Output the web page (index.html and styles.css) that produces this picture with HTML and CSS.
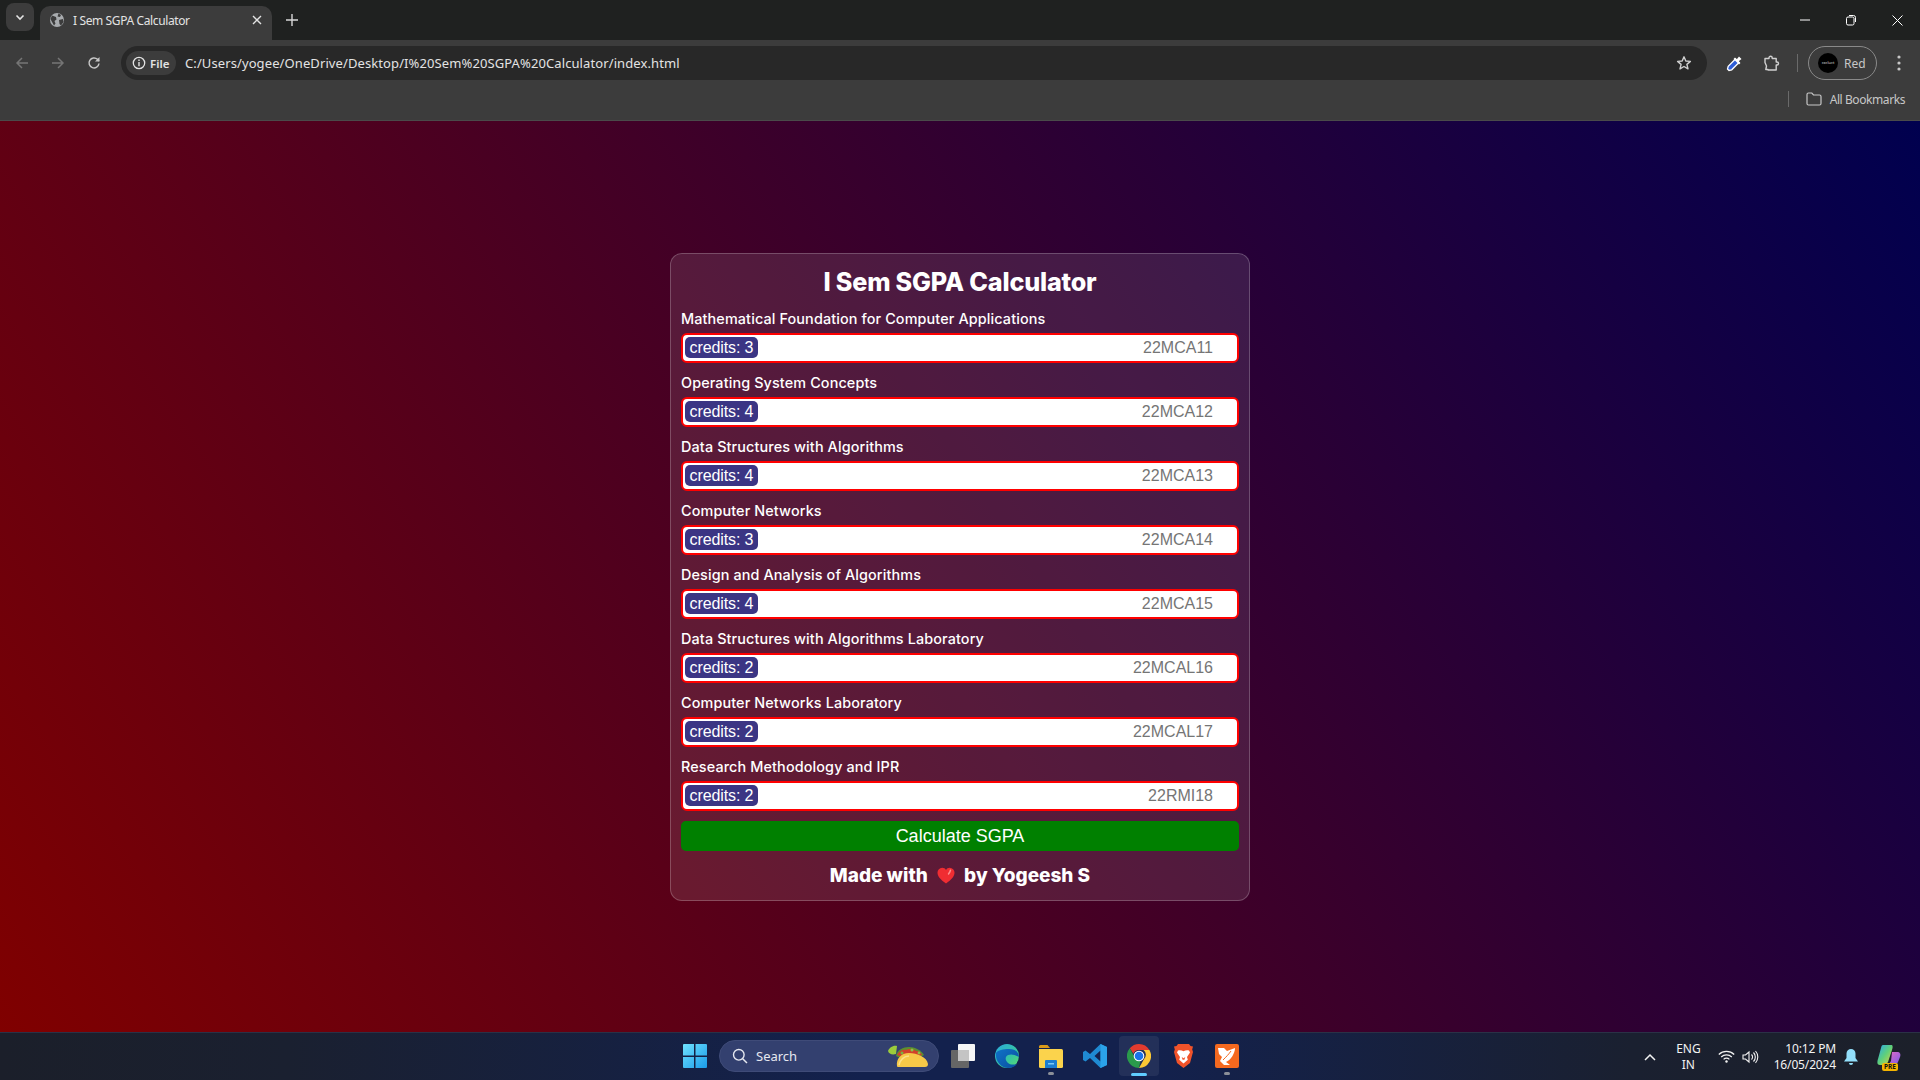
FILE: index.html
```html
<!DOCTYPE html>
<html lang="en">
<head>
<meta charset="utf-8">
<title>I Sem SGPA Calculator</title>
<link rel="stylesheet" href="styles.css">
</head>
<body>
<header class="chrome">
  <div class="tabstrip">
    <div class="tabsearch"><svg width="12" height="12" viewBox="0 0 12 12"><path d="M2.500 4.500 6 8l3.500-3.500" fill="none" stroke="#e3e3e3" stroke-width="1.600"/></svg></div>
    <div class="tab">
      <svg class="favicon" width="16" height="16" viewBox="0 0 16 16"><circle cx="8" cy="8" r="7" fill="#a8abae"/><path d="M3 3.500 7 5l.5 2.500L5.500 9l1 2.500-1.500 2L2.500 9 1.500 7zM9.500 1.500 12 3l-1 2-2.500-.5zM10 8l4-1 .5 3-2.500 3.500L10.500 12z" fill="#3c3c3c"/></svg>
      <span class="tabtitle">I Sem SGPA Calculator</span>
      <svg class="tabclose" width="10" height="10" viewBox="0 0 10 10"><path d="M1 1l8 8M9 1 1 9" stroke="#e3e3e3" stroke-width="1.400"/></svg>
    </div>
    <svg class="newtab" width="12" height="12" viewBox="0 0 12 12"><path d="M6 0v12M0 6h12" stroke="#d8d8d8" stroke-width="1.400"/></svg>
    <div class="winctl">
      <svg width="10" height="10" viewBox="0 0 10 10"><path d="M0 5h10" stroke="#fff"/></svg>
      <svg width="10" height="11" viewBox="0 0 10 11"><rect x=".5" y="2" width="7.500" height="8" rx="1.500" fill="none" stroke="#fff"/><path d="M3 .5h4.500a2 2 0 0 1 2 2V7" fill="none" stroke="#fff"/></svg>
      <svg width="11" height="11" viewBox="0 0 11 11"><path d="M.5.5l10 10M10.500.5l-10 10" stroke="#fff"/></svg>
    </div>
  </div>
  <div class="toolbar">
    <svg class="navicon" width="14" height="14" viewBox="0 0 14 14"><path d="M13 7H2M7 2 2 7l5 5" fill="none" stroke="#757575" stroke-width="1.500"/></svg>
    <svg class="navicon" width="14" height="14" viewBox="0 0 14 14"><path d="M1 7h11M7 2l5 5-5 5" fill="none" stroke="#757575" stroke-width="1.500"/></svg>
    <svg class="navicon" width="14" height="14" viewBox="0 0 14 14"><path d="M12 7.500A5 5 0 1 1 10.500 3.300L12 5" fill="none" stroke="#c7c7c7" stroke-width="1.500"/><path d="M12.500 1v4.500H8z" fill="#c7c7c7"/></svg>
    <div class="omnibox">
      <div class="chip">
        <svg width="14" height="14" viewBox="0 0 14 14"><circle cx="7" cy="7" r="5.700" fill="none" stroke="#e3e3e3" stroke-width="1.300"/><path d="M7 6v4.200M7 3.600v1.300" stroke="#e3e3e3" stroke-width="1.400"/></svg>
        <span>File</span>
      </div>
      <span class="url">C:/Users/yogee/OneDrive/Desktop/I%20Sem%20SGPA%20Calculator/index.html</span>
      <svg class="star" width="16" height="16" viewBox="0 0 16 16"><path d="M8 1.800 9.800 6l4.600.4-3.500 3 1.100 4.500L8 11.500l-4 2.400 1.100-4.500-3.500-3L6.200 6z" fill="none" stroke="#d0d0d0" stroke-width="1.400" stroke-linejoin="round"/></svg>
    </div>
    <svg class="tool dropper" width="18" height="18" viewBox="0 0 18 18"><path d="M3 16.500 1.500 15l.7-2.700L9.500 5l3.500 3.500-7.300 7.300z" fill="#2f5fd8" stroke="#fff" stroke-width="1.300"/><path d="M9 3.500 10.800 5.300 13 2.500 15.500 5 12.700 7.200 14.500 9 13 10.500 7.500 5z" fill="#fff"/></svg>
    <svg class="tool puzzle" width="17" height="17" viewBox="0 0 17 17"><path d="M2 3.500h4V2.800a1.600 1.600 0 0 1 3.200 0v.7h4V7h.8a1.500 1.500 0 0 1 0 3h-.8v5H5v-.5H2.800l.7-3.500L2 7.500z" fill="none" stroke="#d0d0d0" stroke-width="1.400" stroke-linejoin="round"/></svg>
    <div class="tooldiv"></div>
    <div class="profile">
      <div class="avatar"><span>cxcluct</span></div>
      <span>Red</span>
    </div>
    <svg class="kebab" width="4" height="16" viewBox="0 0 4 16"><circle cx="2" cy="2" r="1.600" fill="#c7c7c7"/><circle cx="2" cy="8" r="1.600" fill="#c7c7c7"/><circle cx="2" cy="14" r="1.600" fill="#c7c7c7"/></svg>
  </div>
  <div class="bookmarks">
    <div class="bmdiv"></div>
    <svg width="16" height="14" viewBox="0 0 16 14"><path d="M1 2.500A1.500 1.500 0 0 1 2.500 1h3.300l1.700 2h6A1.500 1.500 0 0 1 15 4.500v7a1.500 1.500 0 0 1-1.500 1.500h-11A1.500 1.500 0 0 1 1 11.500z" fill="none" stroke="#c7c7c7" stroke-width="1.200"/></svg>
    <span>All Bookmarks</span>
  </div>
</header>

<main class="page">
  <section class="card">
    <h1 class="title">I Sem SGPA Calculator</h1>
    <div class="subject"><label class="label">Mathematical Foundation for Computer Applications</label><div class="field"><span class="credits">credits: 3</span><span class="code">22MCA11</span></div></div>
    <div class="subject"><label class="label">Operating System Concepts</label><div class="field"><span class="credits">credits: 4</span><span class="code">22MCA12</span></div></div>
    <div class="subject"><label class="label">Data Structures with Algorithms</label><div class="field"><span class="credits">credits: 4</span><span class="code">22MCA13</span></div></div>
    <div class="subject"><label class="label">Computer Networks</label><div class="field"><span class="credits">credits: 3</span><span class="code">22MCA14</span></div></div>
    <div class="subject"><label class="label">Design and Analysis of Algorithms</label><div class="field"><span class="credits">credits: 4</span><span class="code">22MCA15</span></div></div>
    <div class="subject"><label class="label">Data Structures with Algorithms Laboratory</label><div class="field"><span class="credits">credits: 2</span><span class="code">22MCAL16</span></div></div>
    <div class="subject"><label class="label">Computer Networks Laboratory</label><div class="field"><span class="credits">credits: 2</span><span class="code">22MCAL17</span></div></div>
    <div class="subject"><label class="label">Research Methodology and IPR</label><div class="field"><span class="credits">credits: 2</span><span class="code">22RMI18</span></div></div>
    <button class="calc">Calculate SGPA</button>
    <p class="made">Made with <svg class="heart" width="18" height="17" viewBox="0 0 18 17"><path d="M9 16.500C3.500 12.500.5 9.500.5 5.500A4.800 4.800 0 0 1 5.200.7C6.900.7 8.300 1.600 9 3c.7-1.400 2.100-2.300 3.800-2.300a4.800 4.800 0 0 1 4.700 4.800c0 4-3 7-8.500 11z" fill="#f02d32"/><path d="M11.500 7c.8-1 1.800-2.600 2-3.800" stroke="#ff8f8f" stroke-width="1.500" stroke-linecap="round"/></svg> by Yogeesh S</p>
  </section>
</main>

<footer class="taskbar">
  <div class="taskcenter">
    <svg class="ticon" width="24" height="24" viewBox="0 0 24 24"><defs><linearGradient id="w" x1="0" y1="0" x2="1" y2="1"><stop offset="0" stop-color="#6fe2ff"/><stop offset="1" stop-color="#1a9be8"/></linearGradient></defs><path d="M0 1a1 1 0 0 1 1-1h10v11.500H0zM12.500 0H23a1 1 0 0 1 1 1v10.500H12.500zM0 13h11v11H1a1 1 0 0 1-1-1zM12.500 13H24v10a1 1 0 0 1-1 1H12.500z" fill="url(#w)"/></svg>
    <div class="search">
      <svg width="16" height="16" viewBox="0 0 16 16"><circle cx="6.800" cy="6.800" r="5.300" fill="none" stroke="#e6e8f0" stroke-width="1.400"/><path d="M10.700 10.700 15 15" stroke="#e6e8f0" stroke-width="1.500"/></svg>
      <span>Search</span>
      <svg class="taco" width="40" height="22" viewBox="0 0 40 22"><path d="M0 6c1-3 5-6 9-5l-1 8C4 10 1 9 0 6z" fill="#9ccc3c"/><path d="M8 11C9 5 15 2 21 2c6 0 12 3 15 8l-14 8z" fill="#5d8f2e"/><path d="M9 10c2-4 6-6 9-5 3-2 8-1 10 1 3 0 5 2 6 4L20 14z" fill="#d2402a"/><circle cx="14" cy="8" r="1.500" fill="#7cb342"/><circle cx="24" cy="5" r="1.500" fill="#8bc34a"/><circle cx="31" cy="8" r="1.400" fill="#8bc34a"/><path d="M9 21C8 14 13 8 21 8c8 0 18 4 19 11 0 2-1 3-3 3H11c-1 0-2 0-2-1z" fill="#f7c948"/><path d="M11 20c1-5 5-9 10-9" fill="none" stroke="#fde18a" stroke-width="1.500"/></svg>
    </div>
    <svg class="ticon taskview" width="24" height="24" viewBox="0 0 24 24"><rect x="0" y="6" width="18" height="18" rx="1" fill="#666"/><rect x="7" y="0" width="17" height="17" rx="1" fill="#f6f6f6"/><rect x="7" y="6" width="11" height="11" fill="#c4c4c4"/></svg>
    <svg class="ticon" width="24" height="24" viewBox="0 0 24 24"><defs><linearGradient id="e1" x1="0" y1="0" x2="1" y2="1"><stop offset="0" stop-color="#2aa9e0"/><stop offset=".6" stop-color="#36c6a0"/><stop offset="1" stop-color="#5ddc6a"/></linearGradient><linearGradient id="e2" x1="0" y1="0" x2="1" y2="1"><stop offset="0" stop-color="#0f72c8"/><stop offset="1" stop-color="#0b4f9e"/></linearGradient></defs><circle cx="12" cy="12" r="12" fill="url(#e1)"/><path d="M1 9C0 17 6 24 13 24c4 0 7-1.500 9-4-3 1-7 1-9.500-1.500C10 16 10 12.500 13 11c3-1.300 7-.5 11 2 0-5-4-8-10-8C8 5 3 6 1 9z" fill="url(#e2)"/></svg>
    <div class="tapp">
      <svg width="24" height="24" viewBox="0 0 24 24"><path d="M0 2.500A1.500 1.500 0 0 1 1.500 1h7l2.500 3H0z" fill="#d99a1a"/><path d="M0 5h22.500A1.500 1.500 0 0 1 24 6.500v16a1.500 1.500 0 0 1-1.500 1.500h-21A1.500 1.500 0 0 1 0 22.500z" fill="#fbd34c"/><path d="M7 16h10a1 1 0 0 1 1 1v7H6v-7a1 1 0 0 1 1-1z" fill="#1c7dd0"/><rect x="9" y="19" width="6" height="1.500" fill="#7ccaf5"/></svg>
      <span class="dot"></span>
    </div>
    <svg class="ticon" width="24" height="24" viewBox="0 0 24 24"><path d="M17.500 0 24 3v18l-6.500 3L7 14l-4.500 3.500L0 16V8l2.500-1.500L7 10zM17.500 6.500 11.500 12l6 5.500z" fill="#1f8ad2"/><path d="M17.500 0 24 3v18l-6.500 3z" fill="#2ba3ea"/></svg>
    <div class="active">
      <svg width="24" height="24" viewBox="0 0 24 24"><path d="M12 0a12 12 0 0 1 10.400 6H12a6 6 0 0 0-5.600 3.700L2.800 4.300A12 12 0 0 1 12 0z" fill="#e33b2e"/><path d="M22.400 6A12 12 0 0 1 12 24l5.100-9a6 6 0 0 0-.6-9z" fill="#fcc934"/><path d="M2.800 4.300 7.500 13a6 6 0 0 0 6.100 3L12 24A12 12 0 0 1 2.800 4.300z" fill="#2a9a4b"/><circle cx="12" cy="12" r="5.300" fill="#fff"/><circle cx="12" cy="12" r="4.300" fill="#1a73e8"/></svg>
      <div class="underline"></div>
    </div>
    <svg class="ticon brave" width="21" height="24" viewBox="0 0 21 24"><path d="M5 0h11l1.500 2 2.500.5-.8 3 .8 2.500-3 11-6.500 5-6.500-5L1 8l.8-2.500-.8-3L3.500 2z" fill="#f1532a"/><path d="M5 6.500c2-.5 3.800-.2 5.500.8 1.700-1 3.500-1.300 5.500-.8l1 2-3 4.500.8 2.800-4.300 3.800-4.300-3.800.8-2.800-3-4.500z" fill="#fff"/><path d="M8.700 13l1.800 1.200 1.800-1.200-.9 2.800h-1.800z" fill="#f1532a"/></svg>
    <div class="tapp">
      <svg width="24" height="24" viewBox="0 0 24 24"><rect width="24" height="24" rx="2" fill="#f4691f"/><path d="M3 4h6l3 3 8-3c0 5-4 12-9 14l4 3H9L5 17l2-4-3-3z" fill="#fff"/><path d="M8 16c3-3 6-6 8-9" fill="none" stroke="#f4691f" stroke-width="1"/></svg>
      <span class="dot"></span>
    </div>
  </div>
  <div class="tray">
    <svg width="12" height="8" viewBox="0 0 12 8"><path d="M1 7l5-5 5 5" fill="none" stroke="#f3f3f3" stroke-width="1.500"/></svg>
    <div class="lang"><span>ENG</span><span>IN</span></div>
    <svg class="wifi" width="17" height="13" viewBox="0 0 17 13"><path d="M.8 4.500a11 11 0 0 1 15.400 0M3.200 7a7.500 7.500 0 0 1 10.600 0M5.600 9.400a4 4 0 0 1 5.800 0" fill="none" stroke="#f3f3f3" stroke-width="1.200"/><circle cx="8.500" cy="11.500" r="1.200" fill="#f3f3f3"/></svg>
    <svg class="vol" width="17" height="14" viewBox="0 0 17 14"><path d="M1 5v4h2.500L7 12V2L3.500 5z" fill="none" stroke="#f3f3f3" stroke-width="1.100"/><path d="M9.500 4.500a3.500 3.500 0 0 1 0 5M11.500 2.500a6.500 6.500 0 0 1 0 9M13.500 1a9 9 0 0 1 0 12" fill="none" stroke="#f3f3f3" stroke-width="1.100"/></svg>
    <div class="clock"><span>10:12 PM</span><span>16/05/2024</span></div>
    <svg class="bell" width="14" height="16" viewBox="0 0 14 16"><path d="M7 0a4.500 4.500 0 0 1 4.500 4.500V9l2.500 3.500H0L2.500 9V4.500A4.500 4.500 0 0 1 7 0z" fill="#93dffb"/><path d="M5 14h4a2 2 0 0 1-4 0z" fill="#93dffb"/></svg>
    <div class="copilot">
      <svg width="24" height="24" viewBox="0 0 24 24"><defs><linearGradient id="c1" x1="0" y1="0" x2="1" y2="1"><stop offset="0" stop-color="#2aa8f0"/><stop offset=".5" stop-color="#5fd07a"/><stop offset="1" stop-color="#e8d040"/></linearGradient><linearGradient id="c2" x1="0" y1="0" x2="1" y2="1"><stop offset="0" stop-color="#e86bc0"/><stop offset="1" stop-color="#7a5be8"/></linearGradient></defs><path d="M6 1h8c2 0 2 2 1 5l-4 12c-1 2-3 3-5 3H3c-3 0-3-3-2-6L4 4c.4-2 1-3 2-3z" fill="url(#c1)"/><path d="M15 8h5c3 0 4 2 3 5l-2 5c-1 2-2 3-4 3h-7c2-1 3-2 4-4z" fill="url(#c2)"/></svg>
      <span class="pre">PRE</span>
    </div>
  </div>
</footer>
</body>
</html>
```
FILE: styles.css
```css
* { box-sizing: border-box; }
html, body { margin: 0; height: 100%; }
body {
  width: 1920px; height: 1080px; overflow: hidden;
  display: flex; flex-direction: column;
  font-family: "Liberation Sans", Arial, sans-serif;
  background: #000;
}

/* browser chrome */
.chrome { flex: none; height: 121px; display: flex; flex-direction: column; background: #3c3c3c; font-family: "Noto Sans", "Open Sans", sans-serif; border-bottom: 1px solid #4a4a4a; }
.tabstrip { height: 40px; flex: none; background: #1f2120; display: flex; align-items: center; padding-left: 6px; }
.tabsearch { width: 28px; height: 28px; margin-top: -6px; background: #3c3c3c; border-radius: 8px; display: flex; align-items: center; justify-content: center; }
.tab { width: 232px; height: 34px; margin-left: 6px; margin-top: 6px; padding: 0 9px 6px; background: #3c3c3c; border-radius: 10px 10px 0 0; display: flex; align-items: center; color: #e3e3e3; font-size: 12px; }
.favicon { margin-right: 8px; flex: none; }
.tabtitle { flex: 1; white-space: nowrap; letter-spacing: -.38px; }
.tabclose { margin-right: 1px; }
.newtab { margin-left: 14px; margin-top: 0; }
.winctl { margin-left: auto; display: flex; align-items: center; gap: 36px; padding-right: 17px; }

.toolbar { height: 40px; flex: none; display: flex; align-items: center; padding: 6px 0 0 15px; }
.navicon { margin-right: 22px; flex: none; }
.omnibox { width: 1586px; height: 34px; margin-left: -2px; flex: none; background: #282828; border-radius: 17px; display: flex; align-items: center; padding: 0 15px 0 5px; color: #e3e3e3; }
.chip { height: 24px; width: 50px; flex: none; border-radius: 12px; background: #3c3c3c; display: flex; align-items: center; gap: 4px; padding-left: 6px; font-size: 11.500px; font-weight: 600; }
.url { flex: 1; margin-left: 9px; font-size: 13px; letter-spacing: .1px; white-space: nowrap; }
.tool { flex: none; }
.dropper { margin-left: 19px; }
.puzzle { margin-left: 19px; }
.tooldiv { width: 1px; height: 18px; background: #6a6a6a; margin-left: 17px; }
.profile { width: 69px; height: 34px; margin-left: 10px; flex: none; border: 1px solid #8a8a8a; border-radius: 17px; display: flex; align-items: center; gap: 6px; padding-left: 9px; color: #c7c7c7; font-size: 12px; }
.avatar { width: 20px; height: 20px; border-radius: 50%; background: #000; color: #ddd; font-size: 4px; display: flex; align-items: center; justify-content: center; overflow: hidden; line-height: 1; }
.kebab { margin-left: 20px; flex: none; }
.bookmarks { height: 38px; flex: none; display: flex; align-items: center; justify-content: flex-end; padding-right: 15px; color: #c7c7c7; font-size: 12px; letter-spacing: -.42px; }
.bmdiv { width: 1px; height: 16px; background: #6a6a6a; margin-right: 17px; }
.bookmarks span { margin-left: 8px; }

/* page */
.page { flex: 1; min-height: 0; display: flex; align-items: center; justify-content: center; background: linear-gradient(55deg, #800000, #00004f); }
.card { width: 580px; height: 648px; padding: 0 10px; border: 1px solid rgba(255,255,255,.22); border-radius: 12px; background: rgba(255,255,255,.1); color: #fff; font-family: Inter, "Open Sans", sans-serif; }
.title { margin: 8px 0 6px; height: 40px; line-height: 40px; text-align: center; font-size: 25.200px; font-weight: 800; letter-spacing: -.2px; }
.subject { margin-bottom: 9px; }
.label { display: block; height: 22px; line-height: 22px; margin-bottom: 3px; font-size: 14.400px; font-weight: 500; letter-spacing: .12px; white-space: nowrap; }
.field { height: 30px; background: #fff; border: 2px solid #f00; border-radius: 6px; display: flex; align-items: center; justify-content: space-between; padding: 0 24px 0 2px; font-family: "Liberation Sans", Arial, sans-serif; }
.credits { height: 21px; line-height: 21px; padding: 0 4.500px; border-radius: 5px; background: #3b3584; color: #fff; font-size: 16px; letter-spacing: -.1px; }
.code { color: #757575; font-size: 16px; }
.calc { display: block; width: 100%; height: 30px; margin-top: 10px; border: 0; border-radius: 5px; background: #008000; color: #fff; font-family: "Liberation Sans", Arial, sans-serif; font-size: 18px; padding: 1px 0 0; }
.made { margin: 12px 0 0; height: 26px; line-height: 26px; text-align: center; font-size: 19px; font-weight: 800; display: flex; justify-content: center; align-items: center; gap: 5px; white-space: pre; }

/* taskbar */
.taskbar { flex: none; height: 48px; position: relative; display: flex; align-items: center; justify-content: flex-end; border-top: 1px solid #2a3146; background: linear-gradient(90deg, #1b1f2a 0, #1a2030 15%, #13214d 45%, #13214d 60%, #1a2030 85%, #1c202a 100%); }
.taskcenter { position: absolute; left: 683px; top: -1px; height: 47px; display: flex; align-items: center; color: #e6e8f0; }
.ticon { flex: none; margin-right: 20px; }
.tapp { position: relative; display: flex; flex: none; margin-right: 20px; }
.dot { position: absolute; left: 9px; bottom: -7px; width: 6px; height: 3px; border-radius: 2px; background: #8b8f98; }
.brave { margin: 0 21px 0 2px; }
.search { width: 220px; height: 32px; margin: 0 12px 0 -8px; border-radius: 16px; background: #33406f; display: flex; align-items: center; padding: 0 10px 0 12px; font-family: "Noto Sans", sans-serif; font-size: 13px; gap: 8px; border: 1px solid #3f4b78; }
.taco { margin-left: auto; }
.active { width: 40px; height: 40px; margin: 0 12px 0 -8px; border-radius: 4px; background: rgba(255,255,255,.07); display: flex; flex-direction: column; align-items: center; justify-content: center; position: relative; }
.underline { position: absolute; bottom: 0; left: 12px; width: 16px; height: 3px; border-radius: 2px; background: #60cdff; }
.tray { display: flex; align-items: center; color: #f3f3f3; font-family: "Noto Sans", sans-serif; font-size: 12px; padding-right: 19px; }
.lang { display: flex; flex-direction: column; align-items: center; line-height: 16px; margin-left: 20px; }
.wifi { margin-left: 17px; }
.vol { margin-left: 7px; }
.clock { display: flex; flex-direction: column; align-items: flex-end; line-height: 16px; margin-left: 15px; letter-spacing: -.15px; }
.bell { margin-left: 8px; }
.copilot { position: relative; margin-left: 19px; width: 24px; height: 26px; }
.pre { position: absolute; left: 5px; bottom: -1px; background: #f5b400; color: #111; font-size: 6.500px; font-weight: 700; line-height: 8px; padding: 0 2px; border-radius: 2px; }
```
